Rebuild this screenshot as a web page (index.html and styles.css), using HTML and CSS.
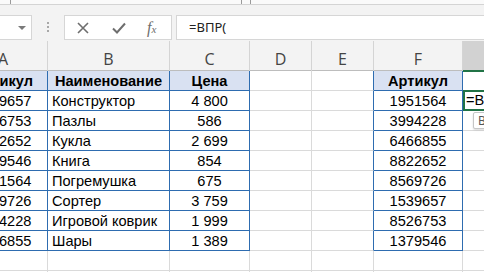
FILE: index.html
```html
<!DOCTYPE html>
<html lang="ru">
<head>
    <meta charset="UTF-8">
    <title>ВПР</title>
    <link rel="stylesheet" href="styles.css">
</head>
<body>
    <div class="top"><i class="tick t1"></i><i class="tick t2"></i><i class="tick t3"></i></div>

    <!-- строка формул -->
    <div class="bar">
        <div class="namebox"><span class="caret"></span></div>
        <div class="grip"><i></i><i></i><i></i></div>
        <div class="fbtns">
            <svg class="ico" width="14" height="14" viewBox="0 0 14 14"><path d="M2 2 L12 12 M12 2 L2 12" stroke="#6e6e6e" stroke-width="1.6" fill="none"/></svg>
            <svg class="ico" width="16" height="14" viewBox="0 0 16 14"><path d="M2 7.5 L6 11.5 L14 2.5" stroke="#6e6e6e" stroke-width="2" fill="none"/></svg>
            <span class="fx">f<sub>x</sub></span>
        </div>
        <div class="finput">=ВПР(</div>
    </div>

    <div class="sheet">
        <div class="row heads">
            <div class="ch">A</div><div class="ch">B</div><div class="ch">C</div><div class="ch">D</div><div class="ch">E</div><div class="ch">F</div><div class="ch sel">G</div>
        </div>

        <div class="row">
            <div class="c tb th">Артикул</div><div class="c tb th">Наименование</div><div class="c tb th">Цена</div><div class="c"></div><div class="c eb"></div><div class="c tb th">Артикул</div><div class="c"></div>
        </div>
        <div class="row">
            <div class="c tb num">1539657</div><div class="c tb txt">Конструктор</div><div class="c tb num">4 800</div><div class="c"></div><div class="c eb"></div><div class="c tb num">1951564</div><div class="c active">=В</div>
        </div>
        <div class="row">
            <div class="c tb num">8526753</div><div class="c tb txt">Пазлы</div><div class="c tb num">586</div><div class="c"></div><div class="c eb"></div><div class="c tb num">3994228</div><div class="c"></div>
        </div>
        <div class="row">
            <div class="c tb num">8822652</div><div class="c tb txt">Кукла</div><div class="c tb num">2 699</div><div class="c"></div><div class="c eb"></div><div class="c tb num">6466855</div><div class="c"></div>
        </div>
        <div class="row">
            <div class="c tb num">1379546</div><div class="c tb txt">Книга</div><div class="c tb num">854</div><div class="c"></div><div class="c eb"></div><div class="c tb num">8822652</div><div class="c"></div>
        </div>
        <div class="row">
            <div class="c tb num">1951564</div><div class="c tb txt">Погремушка</div><div class="c tb num">675</div><div class="c"></div><div class="c eb"></div><div class="c tb num">8569726</div><div class="c"></div>
        </div>
        <div class="row">
            <div class="c tb num">8569726</div><div class="c tb txt">Сортер</div><div class="c tb num">3 759</div><div class="c"></div><div class="c eb"></div><div class="c tb num">1539657</div><div class="c"></div>
        </div>
        <div class="row">
            <div class="c tb num">3994228</div><div class="c tb txt">Игровой коврик</div><div class="c tb num">1 999</div><div class="c"></div><div class="c eb"></div><div class="c tb num">8526753</div><div class="c"></div>
        </div>
        <div class="row">
            <div class="c tb num">6466855</div><div class="c tb txt">Шары</div><div class="c tb num">1 389</div><div class="c"></div><div class="c eb"></div><div class="c tb num">1379546</div><div class="c"></div>
        </div>
        <div class="row">
            <div class="c"></div><div class="c"></div><div class="c"></div><div class="c"></div><div class="c"></div><div class="c"></div><div class="c"></div>
        </div>
        <div class="row">
            <div class="c"></div><div class="c"></div><div class="c"></div><div class="c"></div><div class="c"></div><div class="c"></div><div class="c"></div>
        </div>

        <!-- подсказка функции -->
        <div class="hint">ВПР(искомое_значение; таблица; номер_столбца)</div>
    </div>
</body>
</html>
```

FILE: styles.css
```css
body {
    margin: 0;
    height: 272px;
    overflow: hidden;
    background: #fff;
    font-family: "Liberation Sans", Arial, sans-serif;
}

.top {
    position: relative;
    height: 4px;
    background: #fafafa;
    border-bottom: 1px solid #d4d4d4;
}

.tick {
    position: absolute;
    top: 0;
    width: 1px;
    height: 4px;
    background: #9a9a9a;
}

.t1 { left: 10px; }
.t2 { left: 241px; }
.t3 { left: 250px; }

/* строка формул */
.bar {
    display: flex;
    height: 36px;
    padding-top: 10px;
    padding-bottom: 1px;
    box-sizing: border-box;
    background: #f3f3f3;
}

.namebox {
    width: 32px;
    box-sizing: border-box;
    background: #fff;
    border: 1px solid #d6d6d6;
    border-left: none;
    position: relative;
}

.caret {
    position: absolute;
    left: 18px;
    top: 10px;
    border-left: 4px solid transparent;
    border-right: 4px solid transparent;
    border-top: 4px solid #7a7a7a;
}

.grip {
    width: 32px;
    display: flex;
    flex-direction: column;
    align-items: center;
    justify-content: center;
    gap: 2px;
    padding-bottom: 2px;
}

.grip i {
    width: 2px;
    height: 2px;
    background: #a8a8a8;
}

.fbtns {
    width: 108px;
    box-sizing: border-box;
    background: #fff;
    border: 1px solid #d6d6d6;
    display: flex;
    align-items: center;
    padding-left: 11px;
}

.ico {
    flex: none;
}

.fbtns .ico + .ico {
    margin-left: 21px;
}

.fx {
    margin-left: 20px;
    font-family: "Liberation Serif", serif;
    font-style: italic;
    font-size: 16px;
    color: #6e6e6e;
}

.fx sub {
    font-size: 11px;
    vertical-align: 0;
}

.finput {
    flex: 1;
    margin-left: 4px;
    background: #fff;
    border: 1px solid #d6d6d6;
    border-right: none;
    padding-left: 12px;
    font-family: "Noto Sans", sans-serif;
    font-size: 13px;
    line-height: 23px;
    color: #222;
}

/* лист */
.sheet {
    position: relative;
    margin-left: -41px;
}

.row {
    display: grid;
    grid-template-columns: 89px 122px 80px 62px 62px 89px 100px;
    height: 20px;
}

.heads {
    height: 30px;
    background: #f3f3f3;
    border-bottom: 1px solid #bdbdbd;
    box-sizing: border-box;
}

.ch {
    border-right: 1px solid #d4d4d4;
    font-family: "Open Sans", sans-serif;
    font-size: 16px;
    color: #444;
    text-align: center;
    padding-top: 7px;
    line-height: 22px;
}

.ch.sel {
    background: #d2d2d2;
    border-bottom: 2px solid #217346;
    color: #217346;
}

.c {
    box-sizing: border-box;
    border-right: 1px solid #dadada;
    border-bottom: 1px solid #dadada;
    font-size: 14.6px;
    padding-top: 1px;
    line-height: 18px;
    color: #000;
    white-space: nowrap;
    overflow: hidden;
}

.tb {
    border-right-color: #2e6cb0;
    border-bottom-color: #2e6cb0;
}

.eb {
    border-right-color: #2e6cb0;
}

.th {
    background: #d9e1f2;
    font-weight: bold;
    text-align: center;
}

.num {
    text-align: center;
}

.txt {
    padding-left: 4px;
}

.active {
    border: 2px solid #217346;
    border-right: none;
    margin-top: -1px;
    height: 21px;
    padding-top: 0;
    padding-left: 1px;
    line-height: 17px;
    overflow: visible;
}

.hint {
    position: absolute;
    left: 514px;
    top: 71px;
    height: 15px;
    padding: 0 4px;
    background: #fff;
    border: 1px solid #c6c6c6;
    border-radius: 2px;
    box-shadow: 0 1px 2px rgba(0, 0, 0, 0.15);
    font-family: "Noto Sans", sans-serif;
    font-size: 12px;
    line-height: 15px;
    color: #555;
    white-space: nowrap;
}
```
